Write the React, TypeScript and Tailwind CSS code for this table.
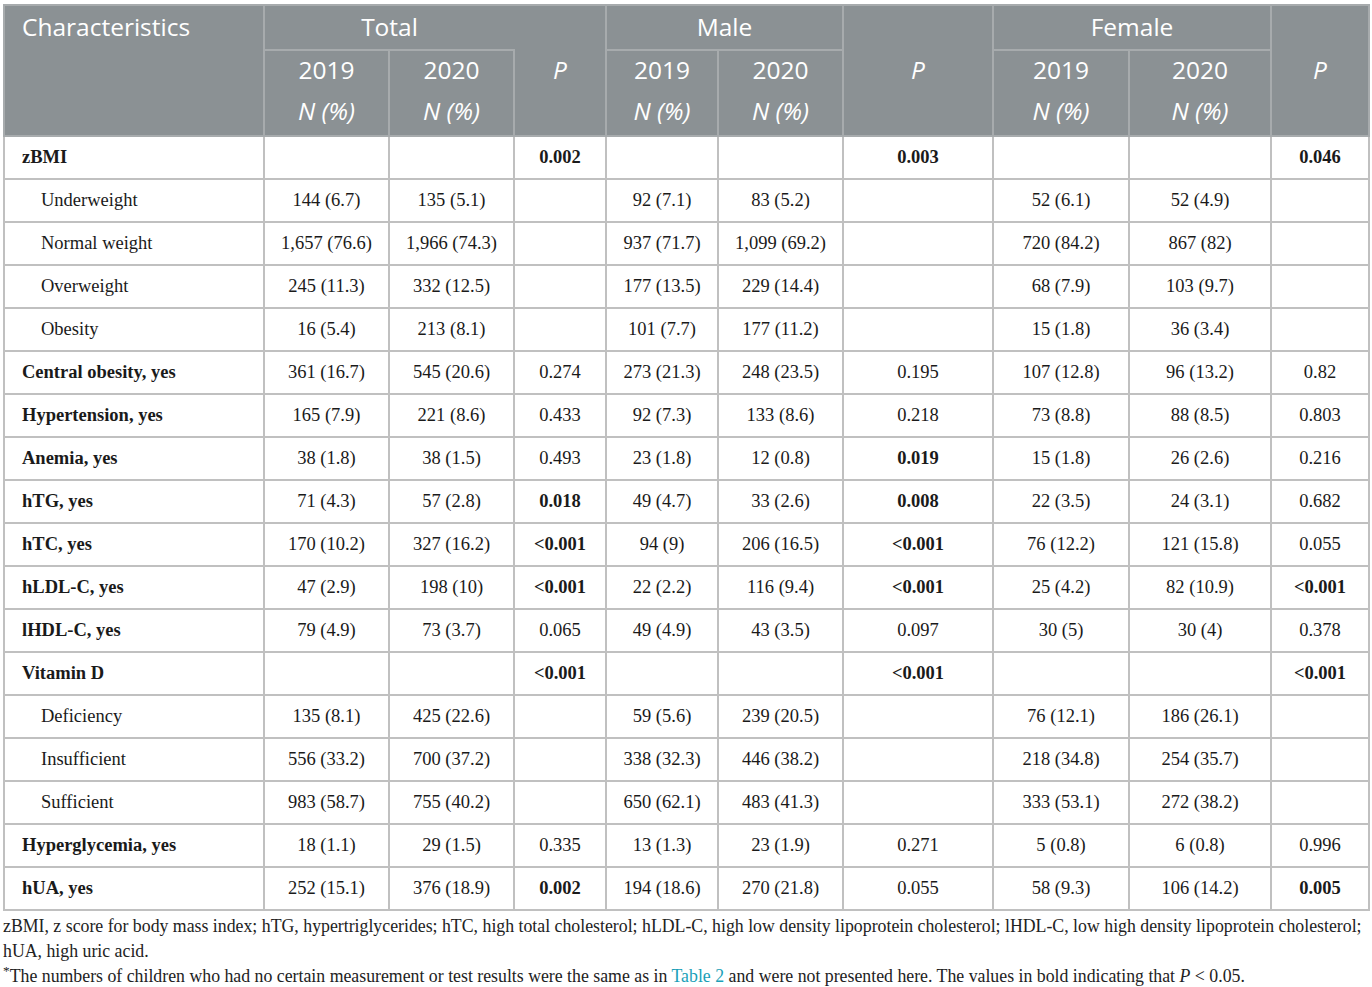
import React from 'react';

type Row = {
  label: string;
  bold?: boolean;
  sub?: boolean;
  v: string[];
  b?: number[];
};

const rows: Row[] = [
  { label: 'zBMI', bold: true, v: ['', '', '0.002', '', '', '0.003', '', '', '0.046'], b: [2, 5, 8] },
  { label: 'Underweight', sub: true, v: ['144 (6.7)', '135 (5.1)', '', '92 (7.1)', '83 (5.2)', '', '52 (6.1)', '52 (4.9)', ''] },
  { label: 'Normal weight', sub: true, v: ['1,657 (76.6)', '1,966 (74.3)', '', '937 (71.7)', '1,099 (69.2)', '', '720 (84.2)', '867 (82)', ''] },
  { label: 'Overweight', sub: true, v: ['245 (11.3)', '332 (12.5)', '', '177 (13.5)', '229 (14.4)', '', '68 (7.9)', '103 (9.7)', ''] },
  { label: 'Obesity', sub: true, v: ['16 (5.4)', '213 (8.1)', '', '101 (7.7)', '177 (11.2)', '', '15 (1.8)', '36 (3.4)', ''] },
  { label: 'Central obesity, yes', bold: true, v: ['361 (16.7)', '545 (20.6)', '0.274', '273 (21.3)', '248 (23.5)', '0.195', '107 (12.8)', '96 (13.2)', '0.82'] },
  { label: 'Hypertension, yes', bold: true, v: ['165 (7.9)', '221 (8.6)', '0.433', '92 (7.3)', '133 (8.6)', '0.218', '73 (8.8)', '88 (8.5)', '0.803'] },
  { label: 'Anemia, yes', bold: true, v: ['38 (1.8)', '38 (1.5)', '0.493', '23 (1.8)', '12 (0.8)', '0.019', '15 (1.8)', '26 (2.6)', '0.216'], b: [5] },
  { label: 'hTG, yes', bold: true, v: ['71 (4.3)', '57 (2.8)', '0.018', '49 (4.7)', '33 (2.6)', '0.008', '22 (3.5)', '24 (3.1)', '0.682'], b: [2, 5] },
  { label: 'hTC, yes', bold: true, v: ['170 (10.2)', '327 (16.2)', '<0.001', '94 (9)', '206 (16.5)', '<0.001', '76 (12.2)', '121 (15.8)', '0.055'], b: [2, 5] },
  { label: 'hLDL-C, yes', bold: true, v: ['47 (2.9)', '198 (10)', '<0.001', '22 (2.2)', '116 (9.4)', '<0.001', '25 (4.2)', '82 (10.9)', '<0.001'], b: [2, 5, 8] },
  { label: 'lHDL-C, yes', bold: true, v: ['79 (4.9)', '73 (3.7)', '0.065', '49 (4.9)', '43 (3.5)', '0.097', '30 (5)', '30 (4)', '0.378'] },
  { label: 'Vitamin D', bold: true, v: ['', '', '<0.001', '', '', '<0.001', '', '', '<0.001'], b: [2, 5, 8] },
  { label: 'Deficiency', sub: true, v: ['135 (8.1)', '425 (22.6)', '', '59 (5.6)', '239 (20.5)', '', '76 (12.1)', '186 (26.1)', ''] },
  { label: 'Insufficient', sub: true, v: ['556 (33.2)', '700 (37.2)', '', '338 (32.3)', '446 (38.2)', '', '218 (34.8)', '254 (35.7)', ''] },
  { label: 'Sufficient', sub: true, v: ['983 (58.7)', '755 (40.2)', '', '650 (62.1)', '483 (41.3)', '', '333 (53.1)', '272 (38.2)', ''] },
  { label: 'Hyperglycemia, yes', bold: true, v: ['18 (1.1)', '29 (1.5)', '0.335', '13 (1.3)', '23 (1.9)', '0.271', '5 (0.8)', '6 (0.8)', '0.996'] },
  { label: 'hUA, yes', bold: true, v: ['252 (15.1)', '376 (18.9)', '0.002', '194 (18.6)', '270 (21.8)', '0.055', '58 (9.3)', '106 (14.2)', '0.005'], b: [2, 8] },
];

const widths = [260, 125, 125, 92, 112, 125, 150, 136, 142, 98];

const hd = 'border-2 border-[#a7abad] text-white font-normal';

function YearCell({ y }: { y: string }) {
  return (
    <th className={`${hd} align-top pt-0`}>
      <div className="leading-[37px]">{y}</div>
      <div className="leading-[45px] italic">N (%)</div>
    </th>
  );
}

export default function App() {
  return (
    <div className="bg-white w-[1372px] h-[987px] pt-[4px] pl-[3px]">
      <table className="border-collapse table-fixed" style={{ width: 1366 }}>
        <colgroup>
          {widths.map((w, i) => (
            <col key={i} style={{ width: w }} />
          ))}
        </colgroup>
        <thead className="bg-[#8b9194] font-['Open_Sans',sans-serif] font-light text-[24.5px]">
          <tr className="h-[45px]">
            <th rowSpan={2} className={`${hd} text-left align-top pl-[17px] pt-[3px]`}>
              Characteristics
            </th>
            <th colSpan={2} className={`${hd} border-r-0`}>Total</th>
            <th rowSpan={2} className={`${hd} border-l-0 italic`}>P</th>
            <th colSpan={2} className={hd}>Male</th>
            <th rowSpan={2} className={`${hd} italic`}>P</th>
            <th colSpan={2} className={hd}>Female</th>
            <th rowSpan={2} className={`${hd} italic`}>P</th>
          </tr>
          <tr className="h-[86px]">
            <YearCell y="2019" />
            <YearCell y="2020" />
            <YearCell y="2019" />
            <YearCell y="2020" />
            <YearCell y="2019" />
            <YearCell y="2020" />
          </tr>
        </thead>
        <tbody className="font-['Liberation_Serif',serif] text-[18.5px] text-[#1a1a1a]">
          {rows.map((r) => (
            <tr key={r.label} className="h-[43px]">
              <td
                className={`border-2 border-[#c0c0c0] ${r.sub ? 'pl-[36px]' : 'pl-[17px]'} ${r.bold ? 'font-bold' : ''}`}
              >
                {r.label}
              </td>
              {r.v.map((val, i) => (
                <td
                  key={i}
                  className={`border-2 border-[#c0c0c0] text-center ${r.b && r.b.includes(i) ? 'font-bold' : ''}`}
                >
                  {val}
                </td>
              ))}
            </tr>
          ))}
        </tbody>
      </table>
      <div className="font-['Liberation_Serif',serif] text-[17.8px] text-[#222] leading-[25px] mt-[3px] pr-[2px]">
        <p>
          zBMI, z score for body mass index; hTG, hypertriglycerides; hTC, high total cholesterol; hLDL-C, high low density lipoprotein cholesterol; lHDL-C, low high density lipoprotein cholesterol; hUA, high uric acid.
        </p>
        <p>
          <sup>*</sup>The numbers of children who had no certain measurement or test results were the same as in{' '}
          <span className="text-[#1a9fb8]">Table 2</span> and were not presented here. The values in bold indicating that{' '}
          <i>P</i> &lt; 0.05.
        </p>
      </div>
    </div>
  );
}
